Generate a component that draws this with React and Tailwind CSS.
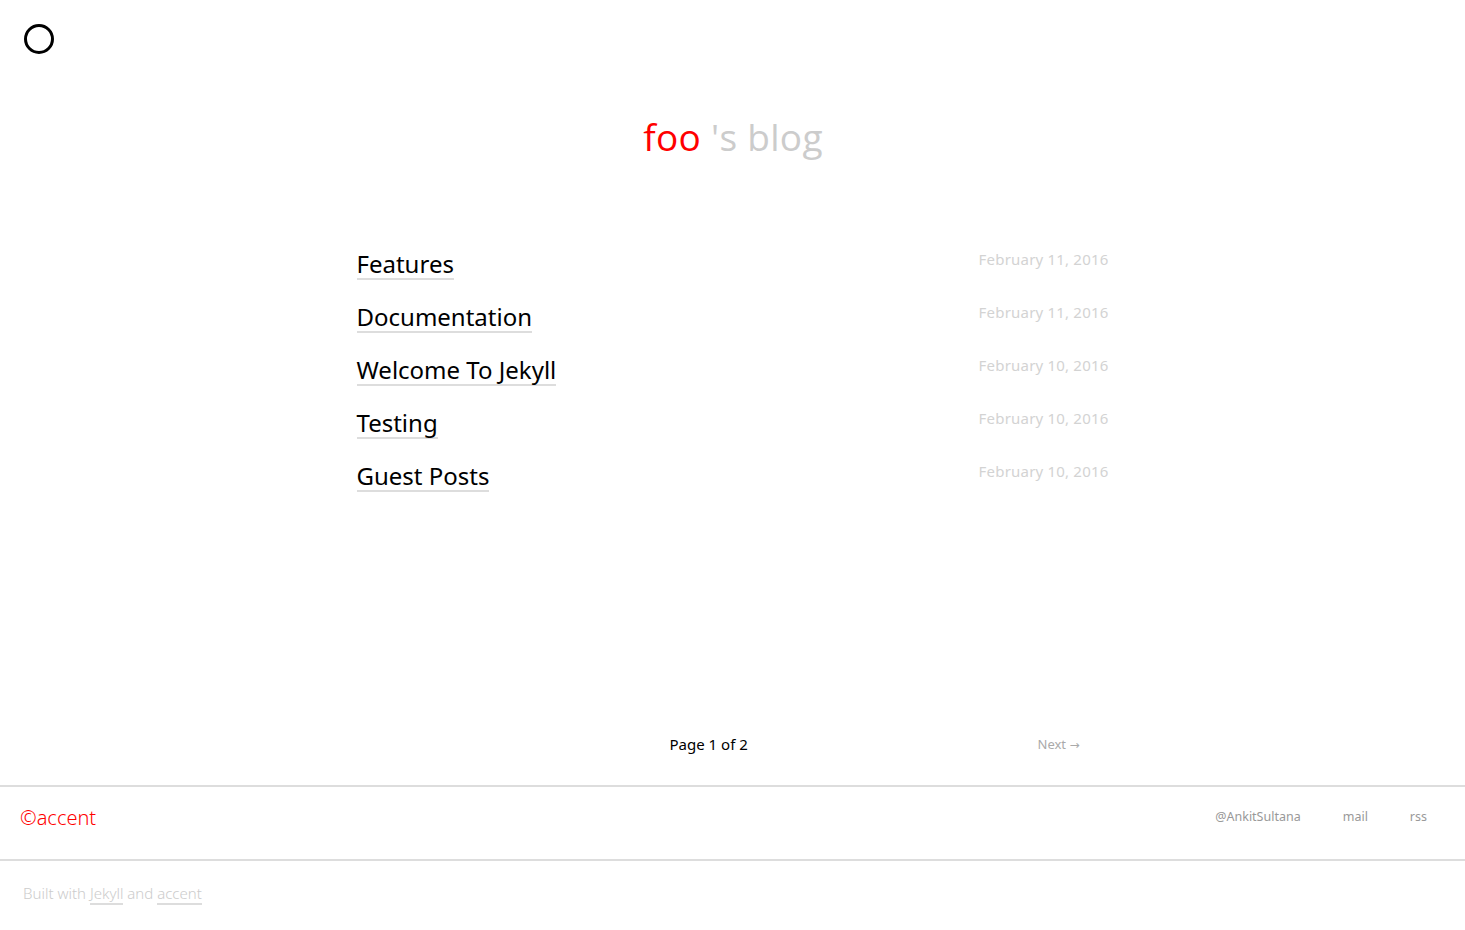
const posts = [
  { title: 'Features', date: 'February 11, 2016' },
  { title: 'Documentation', date: 'February 11, 2016' },
  { title: 'Welcome To Jekyll', date: 'February 10, 2016' },
  { title: 'Testing', date: 'February 10, 2016' },
  { title: 'Guest Posts', date: 'February 10, 2016' },
];

const body = { fontFamily: '"Noto Sans", "Open Sans", sans-serif' };
const display = { fontFamily: '"Open Sans", "Noto Sans", sans-serif' };

function PostRow({ post }) {
  return (
    <li className="flex items-start justify-between h-[53px]">
      <a
        href="#"
        className="text-[24px] leading-[28px] text-black border-b-2 border-[#dddddd] mt-[1px]"
      >
        {post.title}
      </a>
      <span className="text-[15px] leading-[20px] text-[#d3d3d3] tracking-[0.2px]">{post.date}</span>
    </li>
  );
}

export default function App() {
  return (
    <div className="min-h-[930px] bg-white flex flex-col" style={body}>
      <header className="pt-[24px] pl-[24px]">
        <div className="w-[30px] h-[30px] rounded-full border-[3px] border-black" />
      </header>

      <h1
        className="text-center text-[37px] leading-[40px] font-normal tracking-[0.3px] mt-[63px] pl-[1px]"
        style={display}
      >
        <span className="text-[#ff0000]">foo</span>{' '}
        <span className="text-[#cccccc]">'s blog</span>
      </h1>

      <main className="w-[752px] mx-auto mt-[92px]">
        <ul>
          {posts.map((p) => (
            <PostRow key={p.title} post={p} />
          ))}
        </ul>

        <nav className="flex items-center mt-[219px]">
          <span className="w-[313px]" />
          <span className="text-[15px] text-black">Page 1 of 2</span>
          <a href="#" className="ml-auto mr-[29px] text-[13px] text-[#aaaaaa]">
            Next <span className="font-['DejaVu_Sans'] text-[12px]">&rarr;</span>
          </a>
        </nav>
      </main>

      <footer className="mt-[29px]">
        <div className="border-t-2 border-[#dddddd] h-[74px] flex items-center justify-between px-[20px] pb-[10px]">
          <span className="text-[20px] font-light text-[#ff0000]">&copy;accent</span>
          <div className="flex items-center gap-[42px] pr-[18px] text-[12.5px] text-[#999999]">
            <a href="#">@AnkitSultana</a>
            <a href="#">mail</a>
            <a href="#">rss</a>
          </div>
        </div>
        <div className="border-t-2 border-[#dddddd] pt-[21px] pl-[23px] text-[15px] font-light text-[#cccccc]">
          Built with{' '}
          <a href="#" className="border-b-2 border-[#dddddd]">Jekyll</a> and{' '}
          <a href="#" className="border-b-2 border-[#dddddd]">accent</a>
        </div>
      </footer>
    </div>
  );
}
